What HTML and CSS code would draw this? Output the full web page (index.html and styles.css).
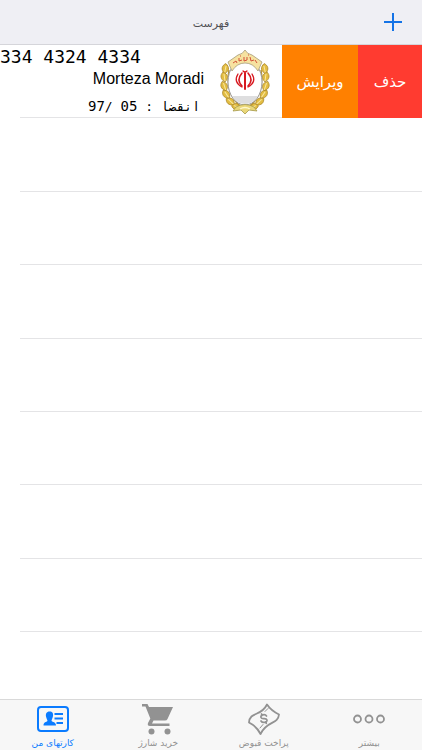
FILE: index.html
```html
<!DOCTYPE html>
<html lang="fa">
<head>
<meta charset="utf-8">
<meta name="viewport" content="width=device-width, initial-scale=1">
<title>فهرست</title>
<link rel="stylesheet" href="styles.css">
</head>
<body>
<header class="navbar">
  <h1 class="navbar-title" dir="rtl">فهرست</h1>
  <button class="add" type="button" aria-label="افزودن">
    <svg width="18" height="18" viewBox="0 0 18 18"><path d="M9 0v18M0 9h18" stroke="#1473e6" stroke-width="2"/></svg>
  </button>
</header>
<main class="list">
  <article class="row card">
    <div class="card-text">
      <p class="number">334 4324 4334</p>
      <p class="name">Morteza Moradi</p>
      <p class="expiry" dir="rtl">انقضا : <span class="digits">05</span> /<span class="digits">97</span></p>
    </div>
    <svg class="emblem" width="50" height="66" viewBox="0 0 50 66" role="img" aria-label="بانک ملی ایران">
      <defs>
        <g id="leaf"><path d="M0 5C-5 2-5-2-2-5C3-3 4 1 0 5Z" fill="#e3bd42" stroke="#a88428" stroke-width=".7"/><path d="M-1-3L0 4" stroke="#f8e7a1" stroke-width="1"/></g>
        <g id="laurel">
          <use href="#leaf" transform="translate(6 20) rotate(20)"/>
          <use href="#leaf" transform="translate(5 28)"/>
          <use href="#leaf" transform="translate(5 37) rotate(-10)"/>
          <use href="#leaf" transform="translate(7 45) rotate(-25)"/>
          <use href="#leaf" transform="translate(11 52) rotate(-40)"/>
          <use href="#leaf" transform="translate(17 57) rotate(-65)"/>
          <path d="M9 21Q5 44 20 57" fill="none" stroke="#b99432" stroke-width="1.5"/>
        </g>
      </defs>
      <use href="#laurel"/>
      <use href="#laurel" transform="translate(50 0) scale(-1 1)"/>
      <ellipse cx="25" cy="33" rx="17" ry="23" fill="#fff" stroke="#9c9ca0"/>
      <path d="M12 47H38Q33 55 25 55T12 47Z" fill="#dededf"/>
      <path d="M8 13L18 6Q23 5 25 1Q27 5 32 6L42 13L38 22Q33 14 25 14T12 22Z" fill="#f6e2a0" stroke="#a59b77" stroke-width=".8"/>
      <path d="M13 14l3-2 1 2M19 9v3l3-1M24 8v4l3-1V8M30 8l1 4 3-1M35 11l2 3M20 7h1M28 6h1" fill="none" stroke="#d35239" stroke-width="1"/>
      <path d="M16 58Q25 53 34 58L37 62L29 61L25 65L21 61L13 62Z" fill="#ead779" stroke="#a69a4d" stroke-width=".8"/>
      <path d="M20 60Q25 57 30 60" fill="none" stroke="#fff8cc" stroke-width="1.3"/>
      <g fill="none" stroke="#d71920" stroke-linecap="round">
        <path d="M25 24V40" stroke-width="2"/>
        <path d="M22 24Q16 31 22 37M28 24Q34 31 28 37" stroke-width="1.600"/>
        <path d="M18 25Q13 33 22 38M32 25Q37 33 28 38" stroke-width="1.300"/>
        <path d="M23 22Q25 24 27 22" stroke-width="1.2"/>
      </g>
    </svg>
    <button class="action edit" type="button" dir="rtl">ویرایش</button>
    <button class="action delete" type="button" dir="rtl">حذف</button>
  </article>
  <div class="row"></div>
  <div class="row"></div>
  <div class="row"></div>
  <div class="row"></div>
  <div class="row"></div>
  <div class="row"></div>
  <div class="row"></div>
</main>
<nav class="tabs">
  <a class="tab active" href="#cards" aria-current="page">
    <svg width="32" height="32" viewBox="0 0 32 32" fill="currentColor">
      <rect x="1" y="4" width="30" height="24" rx="3" fill="none" stroke="currentColor" stroke-width="2"/>
      <path d="M12.500 8.500c3 0 4 2 3.500 4.500S14.500 17 14.500 18c1 1 4.500 1 4.500 4.500H6.500c0-3.500 3-3.500 4-4.500 0-1-1-2-1.500-4.500S9.500 8.500 12.500 8.500Z"/>
      <path d="M17.500 10h8.500v2h-8.500zM17.500 14.500h8.500v2h-8.500zM19.500 19h6.500v2h-6.500z"/>
    </svg>
    <span dir="rtl">کارتهای من</span>
  </a>
  <a class="tab" href="#charge">
    <svg width="32" height="32" viewBox="0 0 32 32" fill="currentColor">
      <path d="M0 1h5.500l1.500 3h24L25.500 16q-.7 1.500-2.500 1.500H11.500L10 20.500h17.500v2.500H8q-3 0-2-3l2.300-4.500L3.500 3.500H0Z"/>
      <circle cx="9.500" cy="28.500" r="3"/><circle cx="25.500" cy="28.500" r="3"/>
    </svg>
    <span dir="rtl">خرید شارژ</span>
  </a>
  <a class="tab" href="#bills">
    <svg width="32" height="32" viewBox="0 0 32 32" fill="none" stroke="currentColor" stroke-linejoin="round" stroke-linecap="round">
      <path d="M1 19.500C2 8 13 14 19 1.500C22 6 26 9 31 11.500C30 22 19 17 12.500 31C10 26 6 22 1 19.500Z" stroke-width="1.800"/>
      <path d="M18.500 13C17 10.500 12 12 13 14.500C14 17 18 14 19 17C19.500 19.500 14.500 20.500 13 18M13.500 11l.8 1.300M17.500 19l.8 1.300" stroke-width="1.700"/>
      <path d="M17 8.500l3-3M12 25l3-3.500" stroke-width="1"/>
    </svg>
    <span dir="rtl">پراخت قبوض</span>
  </a>
  <a class="tab" href="#more">
    <svg width="32" height="32" viewBox="0 0 32 32" fill="none" stroke="currentColor" stroke-width="1.800">
      <circle cx="4.500" cy="16" r="3.500"/><circle cx="16" cy="16" r="3.500"/><circle cx="27.500" cy="16" r="3.500"/>
    </svg>
    <span dir="rtl">بیشتر</span>
  </a>
</nav>
</body>
</html>
```
FILE: styles.css
```css
* { box-sizing: border-box; }

body {
  margin: 0;
  min-height: 100vh;
  display: flex;
  flex-direction: column;
  background: #fff;
  color: #000;
  font-family: "DejaVu Sans", sans-serif;
}

h1, p { margin: 0; font-weight: 400; }

button {
  padding: 0;
  border: 0;
  background: none;
  font: inherit;
}

.navbar {
  display: grid;
  grid-template-columns: 1fr auto 1fr;
  align-items: center;
  height: 45px;
  padding: 0 20px;
  background: #efeff4;
  border-bottom: 1px solid #d5d5da;
}

.navbar-title {
  grid-column: 2;
  padding-top: 4px;
  font-size: 11px;
  line-height: 20px;
  color: #505054;
}

.add { justify-self: end; height: 18px; }

.add svg, .tab svg { display: block; }

.list {
  flex: 1;
  display: flex;
  flex-direction: column;
  padding-bottom: 67px;
}

.row {
  flex: 1 1 73px;
  background: linear-gradient(#e4e4e6, #e4e4e6) 20px 100% / 100% 1px no-repeat;
}

.card { display: flex; }

.card-text {
  flex: 1;
  min-width: 0;
  display: flex;
  flex-direction: column;
  align-items: flex-start;
  overflow: hidden;
}

.number {
  font-family: "DejaVu Sans Mono", monospace;
  font-size: 18px;
  line-height: 24px;
  white-space: nowrap;
}

.name {
  align-self: flex-end;
  font-family: "Liberation Sans", sans-serif;
  font-size: 16px;
  line-height: 20px;
}

.expiry {
  align-self: flex-end;
  padding: 8px 4px 0 0;
  font-family: "DejaVu Sans Mono", monospace;
  font-size: 13px;
  line-height: 20px;
}

.digits { font-size: 14px; line-height: 16px; }

.emblem { align-self: center; margin: 0 12px 0 16px; }

.action { color: #fff; font-size: 15px; }

.edit { width: 76px; background: #ff8000; }

.delete { width: 64px; background: #ff3b30; }

.tabs {
  display: grid;
  grid-template-columns: repeat(4, 1fr);
  height: 51px;
  border-top: 1px solid #d9d9d9;
  background: #f7f7f7;
}

.tab {
  display: flex;
  flex-direction: column;
  align-items: center;
  padding-top: 3px;
  color: #929292;
  font-size: 9px;
  line-height: 16px;
  text-decoration: none;
}

.active { color: #0a7bff; }
```
